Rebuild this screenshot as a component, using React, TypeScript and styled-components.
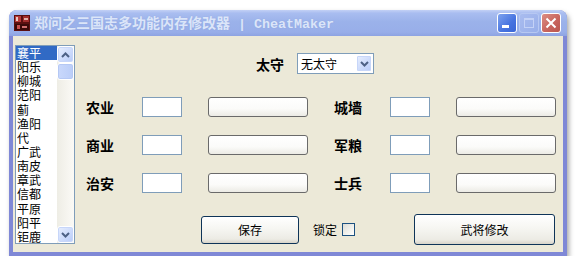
import React from "react";
import styled, { createGlobalStyle } from "styled-components";

const Global = createGlobalStyle`
  html, body { margin: 0; padding: 0; background: #ffffff; }
  body { font-family: "Noto Sans CJK SC", "Liberation Sans", sans-serif; }
  * { box-sizing: border-box; }
`;

const Window = styled.div`
  margin: 10px 0 0 9px;
  width: 558px;
  height: 246px;
  display: flex;
  flex-direction: column;
  border-radius: 8px 8px 0 0;
  background: #7f88d6;
  box-shadow: 2px 3px 5px rgba(0, 0, 0, 0.35);
  overflow: hidden;
`;

const TitleBar = styled.div`
  height: 26px;
  flex: none;
  display: flex;
  align-items: center;
  padding: 0 6px 0 5px;
  background: linear-gradient(
    to bottom,
    #c3d1f5 0%,
    #a9bdf0 12%,
    #9bb2ea 45%,
    #98aee9 85%,
    #8ea3e2 100%
  );
`;

const TitleIcon = styled.svg`
  width: 16px;
  height: 16px;
  flex: none;
  margin-right: 4px;
`;

const TitleText = styled.div`
  flex: 1;
  color: #dbe5f9;
  font-size: 14px;
  font-weight: 700;
  line-height: 16px;
  white-space: nowrap;
  font-family: "Noto Sans CJK SC", sans-serif;
  text-shadow: 0 0 1px rgba(120, 140, 200, 0.4);
`;

const Mono = styled.span`
  font-family: "Liberation Mono", monospace;
  font-size: 13.33px;
  font-weight: 700;
`;

const Caption = styled.div`
  display: flex;
  gap: 2px;
`;

const CapBtn = styled.div<{ $kind: "min" | "max" | "close" }>`
  width: 20px;
  height: 20px;
  border-radius: 3px;
  border: 1px solid ${(p) => (p.$kind === "max" ? "#b7c8f2" : "#ffffff")};
  display: flex;
  align-items: center;
  justify-content: center;
  background: ${(p) =>
    p.$kind === "min"
      ? "linear-gradient(135deg, #7ea2ee 0%, #4673e0 60%, #3a66d6 100%)"
      : p.$kind === "max"
      ? "linear-gradient(135deg, #a9bcef 0%, #98afea 100%)"
      : "linear-gradient(135deg, #dc8d85 0%, #c7635c 60%, #bb574f 100%)"};
`;

const Client = styled.div`
  height: 216px;
  margin: 0 4px;
  background: #ece9d8;
  display: flex;
  padding: 9px 0 0 2px;
`;

const ListBox = styled.div`
  width: 60px;
  height: 199px;
  border: 1px solid #7f9db9;
  background: #ffffff;
  display: flex;
  flex: none;
`;

const Items = styled.div`
  flex: 1;
  overflow: hidden;
`;

const Item = styled.div<{ $sel?: boolean }>`
  height: 14.15px;
  line-height: 14px;
  font-size: 12px;
  padding-left: 1px;
  color: ${(p) => (p.$sel ? "#ffffff" : "#000000")};
  background: ${(p) => (p.$sel ? "#316ac5" : "transparent")};
  white-space: nowrap;
`;

const ScrollBar = styled.div`
  width: 17px;
  display: flex;
  flex-direction: column;
  background: linear-gradient(to right, #eeede5, #fbfaf6);
`;

const ScrollBtn = styled.div`
  height: 17px;
  flex: none;
  border: 1px solid #ffffff;
  border-radius: 3px;
  display: flex;
  align-items: center;
  justify-content: center;
  background: linear-gradient(135deg, #e8effe 0%, #c6d6fb 70%, #b8cbf7 100%);
  box-shadow: inset 0 0 0 1px #c7d6f9;
`;

const Thumb = styled.div`
  height: 17px;
  flex: none;
  border: 1px solid #ffffff;
  border-radius: 3px;
  background: linear-gradient(to right, #c9d8fb, #bacdf8);
  box-shadow: inset 0 0 0 1px #b5c8f4;
`;

const Track = styled.div`
  flex: 1;
`;

const Main = styled.div`
  flex: 1;
  display: flex;
  flex-direction: column;
`;

const TopRow = styled.div`
  margin-top: 8px;
  height: 21px;
  padding-left: 181px;
  display: flex;
  align-items: center;
  gap: 13px;
`;

const Label = styled.div`
  font-size: 14px;
  font-weight: 700;
  color: #000;
  white-space: nowrap;
  line-height: 16px;
`;

const Select = styled.div`
  width: 77px;
  height: 21px;
  border: 1px solid #7f9db9;
  background: #ffffff;
  display: flex;
  align-items: center;
  padding: 1px;
`;

const SelectText = styled.div`
  flex: 1;
  font-size: 12px;
  padding-left: 2px;
  line-height: 14px;
`;

const DropBtn = styled.div`
  width: 16px;
  height: 17px;
  border: 1px solid #ffffff;
  border-radius: 2px;
  display: flex;
  align-items: center;
  justify-content: center;
  background: linear-gradient(135deg, #e8effe 0%, #c6d6fb 70%, #b8cbf7 100%);
  box-shadow: inset 0 0 0 1px #c7d6f9;
`;

const Grid = styled.div`
  margin-top: 23px;
  padding-left: 11px;
  display: grid;
  grid-template-columns: 30px 40px 100px 30px 40px 100px;
  grid-auto-rows: 20px;
  column-gap: 26px;
  row-gap: 18px;
  align-items: center;
`;

const SmallInput = styled.input`
  width: 40px;
  height: 20px;
  border: 1px solid #7f9db9;
  background: #ffffff;
  margin: 0;
  padding: 0 2px;
  font-size: 12px;
  outline: none;
`;

const WideInput = styled.input`
  width: 100px;
  height: 20px;
  border: 1px solid #6a6a6a;
  border-radius: 3px;
  background: linear-gradient(to bottom, #ffffff 0%, #fbfbf9 60%, #ecebe5 100%);
  margin: 0;
  padding: 0 3px;
  font-size: 12px;
  outline: none;
`;

const BottomRow = styled.div`
  margin-top: 21px;
  height: 31px;
  padding-left: 126px;
  display: flex;
  align-items: center;
`;

const XPButton = styled.button<{ $w: number; $h: number }>`
  width: ${(p) => p.$w}px;
  height: ${(p) => p.$h}px;
  border: 1px solid #0e3458;
  border-radius: 3px;
  background: linear-gradient(to bottom, #ffffff 0%, #f6f6f2 45%, #ecebe4 85%, #d8d4c9 100%);
  font-family: "Noto Sans CJK SC", sans-serif;
  font-size: 12px;
  color: #000;
  padding: 0;
  margin: 0;
`;

const LockGroup = styled.div`
  display: flex;
  align-items: center;
  gap: 5px;
  margin-left: 14px;
  margin-right: 59px;
  font-size: 12px;
  line-height: 14px;
`;

const CheckBox = styled.span`
  width: 13px;
  height: 13px;
  border: 1px solid #1c5180;
  background: linear-gradient(135deg, #dcdcd5 0%, #f2f2ee 60%, #ffffff 100%);
  display: inline-block;
`;

const cities = [
  "襄平",
  "阳乐",
  "柳城",
  "范阳",
  "蓟",
  "渔阳",
  "代",
  "广武",
  "南皮",
  "章武",
  "信都",
  "平原",
  "阳平",
  "钜鹿",
];

const rows: [string, string][] = [
  ["农业", "城墙"],
  ["商业", "军粮"],
  ["治安", "士兵"],
];

const Chevron = ({ up }: { up?: boolean }) => (
  <svg width="9" height="6" viewBox="0 0 9 6">
    <path
      d={up ? "M1 5 L4.5 1.5 L8 5" : "M1 1 L4.5 4.5 L8 1"}
      fill="none"
      stroke="#4d6185"
      strokeWidth="2"
    />
  </svg>
);

export default function App() {
  return (
    <>
      <Global />
      <Window>
        <TitleBar>
          <TitleIcon viewBox="0 0 16 16">
            <rect x="0" y="0" width="16" height="16" fill="#5a1010" />
            <rect x="1" y="1" width="6" height="6" fill="#b83a3a" />
            <rect x="9" y="1" width="6" height="6" fill="#a02c2c" />
            <rect x="2" y="2" width="2" height="4" fill="#e8c9c0" />
            <rect x="10" y="3" width="4" height="2" fill="#e0b0a8" />
            <rect x="1" y="9" width="14" height="6" fill="#3a0a0a" />
            <rect x="3" y="10" width="3" height="4" fill="#c85050" />
            <rect x="8" y="11" width="5" height="2" fill="#d07070" />
          </TitleIcon>
          <TitleText>
            郑问之三国志多功能内存修改器<Mono> | CheatMaker</Mono>
          </TitleText>
          <Caption>
            <CapBtn $kind="min">
              <svg width="18" height="18" viewBox="0 0 18 18">
                <rect x="4" y="11" width="7" height="3" fill="#ffffff" />
              </svg>
            </CapBtn>
            <CapBtn $kind="max">
              <svg width="18" height="18" viewBox="0 0 18 18">
                <rect x="4.5" y="4.5" width="9" height="9" fill="none" stroke="#c4d2f6" strokeWidth="1" />
                <rect x="4.5" y="4.5" width="9" height="1.5" fill="#c4d2f6" />
              </svg>
            </CapBtn>
            <CapBtn $kind="close">
              <svg width="18" height="18" viewBox="0 0 18 18">
                <path d="M4.5 4.5 L13.5 13.5 M13.5 4.5 L4.5 13.5" stroke="#ffffff" strokeWidth="2" />
              </svg>
            </CapBtn>
          </Caption>
        </TitleBar>
        <Client>
          <ListBox>
            <Items>
              {cities.map((c, i) => (
                <Item key={c} $sel={i === 0}>
                  {c}
                </Item>
              ))}
            </Items>
            <ScrollBar>
              <ScrollBtn>
                <Chevron up />
              </ScrollBtn>
              <Thumb />
              <Track />
              <ScrollBtn>
                <Chevron />
              </ScrollBtn>
            </ScrollBar>
          </ListBox>
          <Main>
            <TopRow>
              <Label>太守</Label>
              <Select>
                <SelectText>无太守</SelectText>
                <DropBtn>
                  <Chevron />
                </DropBtn>
              </Select>
            </TopRow>
            <Grid>
              {rows.map(([a, b]) => (
                <React.Fragment key={a}>
                  <Label>{a}</Label>
                  <SmallInput defaultValue="" />
                  <WideInput defaultValue="" />
                  <Label>{b}</Label>
                  <SmallInput defaultValue="" />
                  <WideInput defaultValue="" />
                </React.Fragment>
              ))}
            </Grid>
            <BottomRow>
              <XPButton $w={98} $h={28}>保存</XPButton>
              <LockGroup>
                锁定
                <CheckBox />
              </LockGroup>
              <XPButton $w={141} $h={31}>武将修改</XPButton>
            </BottomRow>
          </Main>
        </Client>
      </Window>
    </>
  );
}
